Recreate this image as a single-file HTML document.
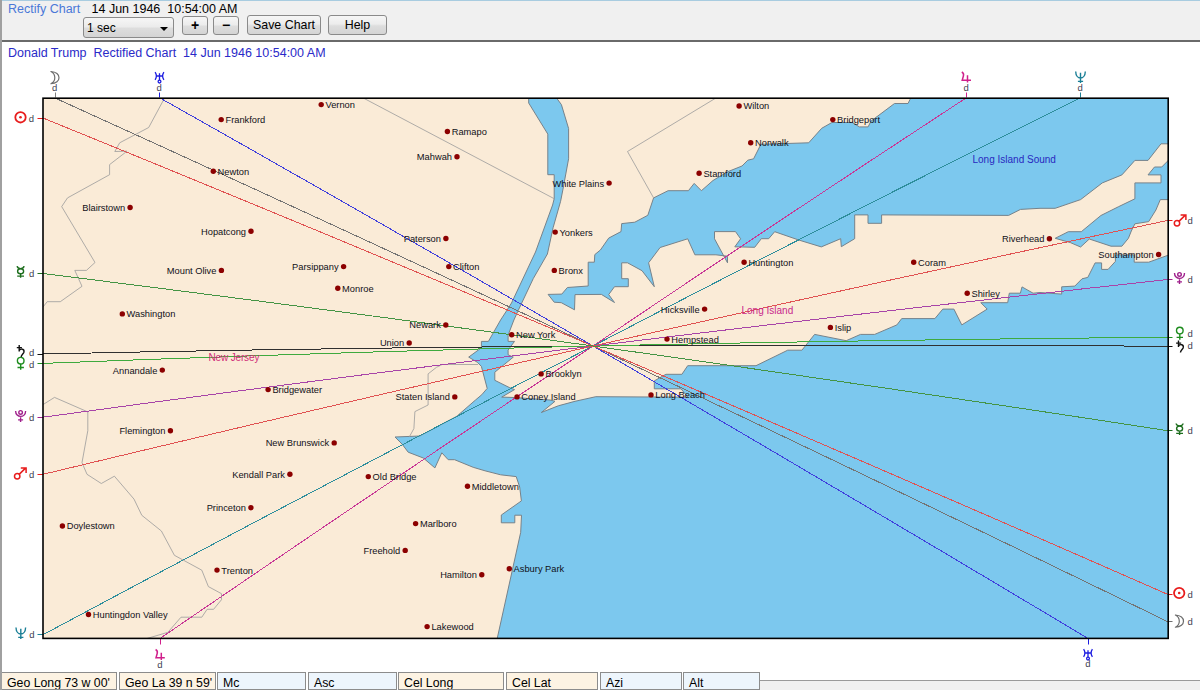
<!DOCTYPE html>
<html><head><meta charset="utf-8"><style>
html,body{margin:0;padding:0;}
body{width:1200px;height:690px;position:relative;overflow:hidden;background:#fff;font-family:"Liberation Sans",sans-serif;}
#hdr{position:absolute;left:0;top:0;width:1200px;height:40px;background:#f0f0f0;}
#topline{position:absolute;left:0;top:0;width:1200px;height:1px;background:#a8cce0;}
#hline{position:absolute;left:0;top:40px;width:1200px;height:2px;background:#6a6a6a;}
#lborder{position:absolute;left:0;top:0;width:1.5px;height:690px;background:#a0a0a0;}
.t{position:absolute;white-space:nowrap;}
.cl{position:absolute;white-space:nowrap;font-size:9.3px;line-height:12px;color:#101018;}
.cl.r{text-align:right;}
.btn{position:absolute;box-sizing:border-box;border:1px solid #8a8a8a;border-radius:3px;background:linear-gradient(#f6f6f6 0%,#ececec 45%,#dddddd 55%,#d4d4d4 100%);font-size:12.4px;color:#000;text-align:center;}
.cell{position:absolute;box-sizing:border-box;top:672px;height:18px;border:1px solid #8c8c8c;font-size:12.3px;padding-left:5px;line-height:21.5px;color:#000;white-space:nowrap;overflow:hidden;}
.be{background:#fdf3e3;} .bl{background:#edf5fc;}
</style></head><body>
<div id="hdr"></div><div id="topline"></div><div id="hline"></div>
<div class="t" style="left:8px;top:1.6px;font-size:12.5px;color:#4a78d8;">Rectify Chart</div>
<div class="t" style="left:91.5px;top:1.6px;font-size:12.5px;color:#000;">14 Jun 1946&nbsp;&nbsp;10:54:00 AM</div>
<div class="btn" style="left:83px;top:17px;width:91px;height:21px;text-align:left;padding-left:3px;line-height:20px;font-size:12px;">1 sec<span style="position:absolute;right:5px;top:8.5px;width:0;height:0;border-left:4px solid transparent;border-right:4px solid transparent;border-top:4px solid #000;"></span></div>
<div class="btn" style="left:182px;top:16px;width:26px;height:19px;line-height:17px;font-weight:bold;font-size:14px;">+</div>
<div class="btn" style="left:213px;top:16px;width:26px;height:19px;line-height:17px;font-weight:bold;font-size:14px;">&minus;</div>
<div class="btn" style="left:247px;top:15px;width:74px;height:20px;line-height:18px;">Save Chart</div>
<div class="btn" style="left:328px;top:15px;width:59px;height:20px;line-height:18px;">Help</div>
<div class="t" style="left:8px;top:46.3px;font-size:12.5px;color:#2a2ac8;">Donald Trump&nbsp;&nbsp;Rectified Chart&nbsp;&nbsp;14 Jun 1946 10:54:00 AM</div>
<svg width="1200" height="690" viewBox="0 0 1200 690" style="position:absolute;left:0;top:0"><rect x="43" y="98" width="1125" height="540.5" fill="#faebd7"/><g clip-path="url(#mapclip)"><defs><clipPath id="mapclip"><rect x="43" y="98" width="1125.5" height="540.5"/></clipPath></defs><polygon points="528.7,97.0 528.7,103.0 547.8,134.1 547.8,174.7 554.2,174.7 554.2,198.7 552.6,205.0 535.5,252.0 511.5,303.0 505.8,312.0 500.6,320.0 488.4,341.4 481.4,341.4 481.4,347.8 468.7,357.1 477.4,362.3 481.4,366.4 487.2,388.4 481.8,394.7 475.5,400.0 456.9,416.2 419.8,436.0 395.0,437.0 402.0,444.0 408.2,452.2 423.3,458.0 434.9,467.9 441.8,452.8 448.2,459.7 454.6,459.7 473.2,467.3 485.0,470.8 500.6,474.8 516.2,476.6 519.7,487.0 521.4,500.9 501.3,515.0 501.3,522.8 514.8,522.8 514.8,515.2 521.5,515.2 520.7,532.3 497.1,639.0 1169.0,639.0 1169.0,254.9 1148.7,262.2 1134.2,262.2 1134.2,254.9 1115.4,254.9 1115.4,261.4 1108.1,269.4 1101.6,269.4 1101.6,262.9 1095.1,262.9 1087.8,277.4 1082.0,278.8 1074.8,286.1 1061.7,286.8 1061.7,294.1 1040.0,292.5 1033.1,293.2 1022.0,286.9 1020.4,293.2 1009.3,293.2 1007.7,302.7 980.8,302.7 987.2,309.1 961.8,324.9 953.9,309.1 942.8,309.1 934.9,318.6 901.7,318.6 896.9,324.9 874.7,334.4 860.5,334.4 846.2,340.7 814.6,334.4 801.9,350.2 787.7,350.2 756.0,365.7 687.7,365.7 681.9,374.3 665.9,374.3 654.3,380.9 654.3,388.8 681.0,388.8 688.0,397.2 595.8,396.7 575.0,401.3 558.3,405.8 541.3,412.5 555.0,401.3 550.0,400.0 514.2,397.5 501.7,397.1 514.5,389.6 509.9,387.8 494.8,380.3 494.8,372.2 513.3,357.1 508.1,354.8 508.1,350.1 514.5,341.4 508.1,341.4 508.1,335.1 513.9,320.0 518.2,310.5 533.3,278.5 547.4,254.0 553.1,227.7 560.6,201.3 563.0,189.1 568.6,158.8 568.6,128.5 561.4,104.6 555.8,97.0" fill="#7cc8ee" stroke="#76828a" stroke-width="1" stroke-linejoin="miter"/><polygon points="548.1,294.4 554.2,302.2 561.3,302.7 574.5,309.8 575.0,294.6 601.4,294.4 614.5,302.5 608.7,294.6 614.5,286.7 628.3,286.7 628.3,278.7 621.7,278.7 621.7,262.8 627.5,262.8 642.0,270.7 654.3,286.7 648.6,262.8 660.1,247.5 687.7,238.8 694.9,254.8 715.9,254.8 727.5,256.2 727.5,262.8 714.5,238.8 714.5,231.6 735.5,231.6 740.6,238.8 734.8,246.8 754.7,247.3 761.3,238.7 768.7,238.7 774.7,231.7 798.7,240.0 821.3,246.9 840.7,238.7 841.3,246.7 854.7,238.7 854.7,214.9 868.0,214.9 868.0,223.3 881.6,223.3 881.6,214.9 1008.6,215.4 1020.5,209.4 1040.0,208.3 1055.2,208.3 1080.6,199.6 1102.3,182.9 1121.9,174.9 1134.9,160.4 1148.0,160.4 1161.0,143.8 1169.0,143.8 1169.0,97.0 910.5,97.0 910.0,99.5 908.0,103.5 894.5,103.5 871.0,121.1 868.1,126.9 859.4,126.9 852.2,122.5 831.9,122.5 821.7,128.3 808.7,142.8 760.9,144.3 753.6,158.8 747.8,160.2 742.0,166.0 727.5,171.8 713.0,180.5 701.4,190.7 694.2,183.4 688.4,190.7 668.1,190.7 653.6,197.9 647.8,215.3 634.8,222.2 621.7,223.6 621.0,231.6 608.7,238.1 600.4,250.0 594.8,254.6 594.3,262.2 588.2,262.2 588.2,286.0 567.4,287.5 561.8,294.1" fill="#7cc8ee" stroke="#76828a" stroke-width="1" stroke-linejoin="miter"/><polygon points="1169.0,159.7 1161.7,167.0 1154.5,167.0 1148.0,174.9 1161.0,174.9 1161.0,182.9 1134.9,182.9 1134.9,198.8 1118.3,206.8 1100.9,215.5 1081.3,231.7 1068.3,231.7 1055.2,238.3 1070.4,242.6 1080.6,247.0 1089.3,239.0 1111.0,246.2 1121.9,246.2 1128.4,238.3 1131.3,231.0 1134.9,223.8 1148.7,221.6 1155.9,210.0 1160.3,199.6 1169.0,199.6" fill="#7cc8ee" stroke="#76828a" stroke-width="1" stroke-linejoin="miter"/><polyline points="164.6,98.0 148.7,127.5 119.7,142.8 114.8,151.5 127.0,151.2 109.6,164.6 109.6,174.7 67.5,197.9 61.7,206.6 95.0,262.5 86.4,270.4 74.8,270.4 82.0,286.3 60.3,301.7 47.2,301.7 43.0,307.0" fill="none" stroke="#9a9a9a" stroke-width="0.8"/><polyline points="43.0,404.6 54.5,397.4 87.8,411.9 87.8,430.7 82.0,462.6 87.0,474.3 101.3,483.5 114.4,476.2 134.0,499.1 141.8,515.3 161.4,531.0 174.4,555.3 201.8,570.2 208.4,586.6 221.5,593.7 221.5,599.7 213.6,609.3 207.1,609.3 201.8,617.2 181.0,617.2 167.9,632.3 147.0,638.5" fill="none" stroke="#9a9a9a" stroke-width="0.8"/><polyline points="363.3,98.0 554.2,198.7" fill="none" stroke="#9a9a9a" stroke-width="0.8"/><polyline points="715.9,98.0 627.5,151.5 653.6,197.9" fill="none" stroke="#9a9a9a" stroke-width="0.8"/><polyline points="478.0,364.5 442.2,364.5 436.5,367.3 428.1,373.9 428.1,405.0 414.9,411.6 413.9,428.6 409.2,437.1" fill="none" stroke="#9a9a9a" stroke-width="0.8"/></g><path d="M55,98 Q324.0,220.0 593,346 Q880.5,481.9 1168,621.8" fill="none" stroke="#747474" stroke-width="1" shape-rendering="crispEdges"/><path d="M160,98 Q376.5,220.0 593,346 Q840.5,490.2 1088,638.5" fill="none" stroke="#4040dc" stroke-width="1" shape-rendering="crispEdges"/><path d="M966,98 Q779.5,220.0 593,346 Q376.5,490.2 160,638.5" fill="none" stroke="#c83896" stroke-width="1" shape-rendering="crispEdges"/><path d="M1080,98 Q836.5,219.0 593,346 Q318.0,487.4 43,634.7" fill="none" stroke="#2e8e9c" stroke-width="1" shape-rendering="crispEdges"/><path d="M43,118 Q318.0,230.0 593,346 Q880.5,468.2 1168,594.5" fill="none" stroke="#e05252" stroke-width="1" shape-rendering="crispEdges"/><path d="M43,273.5 Q318.0,307.8 593,346 Q880.5,386.4 1168,430.7" fill="none" stroke="#449444" stroke-width="1" shape-rendering="crispEdges"/><path d="M43,354 Q318.0,348.0 593,346 Q880.5,344.1 1168,346.3" fill="none" stroke="#303030" stroke-width="1" shape-rendering="crispEdges"/><path d="M43,363.4 Q318.0,352.7 593,346 Q880.5,339.6 1168,337.3" fill="none" stroke="#3eaa3e" stroke-width="1" shape-rendering="crispEdges"/><path d="M43,417.2 Q318.0,379.6 593,346 Q880.5,310.8 1168,279.5" fill="none" stroke="#a844a8" stroke-width="1" shape-rendering="crispEdges"/><path d="M43,474.3 Q318.0,408.1 593,346 Q880.5,281.2 1168,220.4" fill="none" stroke="#e05252" stroke-width="1" shape-rendering="crispEdges"/><circle cx="321.2" cy="104.6" r="2.7" fill="#8c0000"/><circle cx="221.2" cy="119.6" r="2.7" fill="#8c0000"/><circle cx="213.3" cy="171.2" r="2.7" fill="#8c0000"/><circle cx="130.1" cy="207.5" r="2.7" fill="#8c0000"/><circle cx="251" cy="231.2" r="2.7" fill="#8c0000"/><circle cx="221.4" cy="270.4" r="2.7" fill="#8c0000"/><circle cx="343.6" cy="266.6" r="2.7" fill="#8c0000"/><circle cx="337.8" cy="288.3" r="2.7" fill="#8c0000"/><circle cx="122.3" cy="313.9" r="2.7" fill="#8c0000"/><circle cx="162.3" cy="370.1" r="2.7" fill="#8c0000"/><circle cx="268.1" cy="389.6" r="2.7" fill="#8c0000"/><circle cx="170.4" cy="430.7" r="2.7" fill="#8c0000"/><circle cx="334.2" cy="442.9" r="2.7" fill="#8c0000"/><circle cx="289.9" cy="474.3" r="2.7" fill="#8c0000"/><circle cx="250.9" cy="507.8" r="2.7" fill="#8c0000"/><circle cx="62.4" cy="526" r="2.7" fill="#8c0000"/><circle cx="217" cy="570.1" r="2.7" fill="#8c0000"/><circle cx="88.5" cy="614.5" r="2.7" fill="#8c0000"/><circle cx="447.4" cy="131.5" r="2.7" fill="#8c0000"/><circle cx="457" cy="156.7" r="2.7" fill="#8c0000"/><circle cx="609.1" cy="183.1" r="2.7" fill="#8c0000"/><circle cx="445.9" cy="238.5" r="2.7" fill="#8c0000"/><circle cx="448.8" cy="266.6" r="2.7" fill="#8c0000"/><circle cx="555.2" cy="232.1" r="2.7" fill="#8c0000"/><circle cx="554.3" cy="270.4" r="2.7" fill="#8c0000"/><circle cx="445.8" cy="325" r="2.7" fill="#8c0000"/><circle cx="409.2" cy="343" r="2.7" fill="#8c0000"/><circle cx="511.7" cy="334.7" r="2.7" fill="#8c0000"/><circle cx="454.8" cy="396.9" r="2.7" fill="#8c0000"/><circle cx="541.1" cy="373.9" r="2.7" fill="#8c0000"/><circle cx="517" cy="396.9" r="2.7" fill="#8c0000"/><circle cx="368.3" cy="476.6" r="2.7" fill="#8c0000"/><circle cx="467.5" cy="486.3" r="2.7" fill="#8c0000"/><circle cx="415.6" cy="523.6" r="2.7" fill="#8c0000"/><circle cx="405.2" cy="550.4" r="2.7" fill="#8c0000"/><circle cx="481.8" cy="574.7" r="2.7" fill="#8c0000"/><circle cx="509.3" cy="568.8" r="2.7" fill="#8c0000"/><circle cx="427.1" cy="626.6" r="2.7" fill="#8c0000"/><circle cx="739.1" cy="106" r="2.7" fill="#8c0000"/><circle cx="832.8" cy="119.6" r="2.7" fill="#8c0000"/><circle cx="750.7" cy="142.8" r="2.7" fill="#8c0000"/><circle cx="699.1" cy="173.3" r="2.7" fill="#8c0000"/><circle cx="744.1" cy="262.2" r="2.7" fill="#8c0000"/><circle cx="704.6" cy="309.1" r="2.7" fill="#8c0000"/><circle cx="667" cy="339.1" r="2.7" fill="#8c0000"/><circle cx="651" cy="394.9" r="2.7" fill="#8c0000"/><circle cx="830.4" cy="327.4" r="2.7" fill="#8c0000"/><circle cx="913.7" cy="262.2" r="2.7" fill="#8c0000"/><circle cx="967.2" cy="293.2" r="2.7" fill="#8c0000"/><circle cx="1049.4" cy="238.7" r="2.7" fill="#8c0000"/><circle cx="1158.6" cy="254.5" r="2.7" fill="#8c0000"/><g transform="translate(54.5,77.5)"><path d="M-3.6,-6 C7.2,-5.5 7.2,5.8 -3.6,6.2 C1.6,3.5 1.6,-3.2 -3.6,-6 Z" fill="#fff" stroke="#6e6e6e" stroke-width="1.2" stroke-linejoin="round"/></g><text x="52" y="90.5" font-family="Liberation Sans" font-size="9.5" fill="#404050">d</text><g transform="translate(159.5,77.5)" fill="none" stroke="#1c1ce0" stroke-width="1.3"><path d="M-4.4,-5.4 Q-1.8,-1.5 -4.4,2.4 M4.4,-5.4 Q1.8,-1.5 4.4,2.4 M-3.2,-1.5 H3.2 M0,-4.2 V2.6"/><circle cy="4.1" r="1.4"/></g><text x="156.5" y="90.5" font-family="Liberation Sans" font-size="9.5" fill="#404050">d</text><g transform="translate(966.2,77)" fill="none" stroke="#d0208c" stroke-width="1.5"><path d="M-4.4,-5 C-2.6,-4 -2.2,-3 -2.8,-1 L-4,3.2 H4.8 M1.3,-1.8 V5.6"/></g><text x="963.5" y="90.5" font-family="Liberation Sans" font-size="9.5" fill="#404050">d</text><g transform="translate(1080.5,77)" fill="none" stroke="#1a7f96" stroke-width="1.4"><path d="M-4.8,-5.6 C-4.6,3.2 4.6,3.2 4.8,-5.6 M0,-4.2 V6 M-2.6,4.4 H2.6"/></g><text x="1077.5" y="90.5" font-family="Liberation Sans" font-size="9.5" fill="#404050">d</text><line x1="55.5" y1="92.5" x2="55.5" y2="97.5" stroke="#808080" stroke-width="1"/><line x1="159.5" y1="92.5" x2="159.5" y2="97.5" stroke="#1c1ce0" stroke-width="1"/><line x1="966.5" y1="92.5" x2="966.5" y2="97.5" stroke="#d0208c" stroke-width="1"/><line x1="1080.5" y1="92.5" x2="1080.5" y2="97.5" stroke="#1a7f96" stroke-width="1"/><g transform="translate(20.5,117.3)"><circle r="5.2" fill="none" stroke="#e81c1c" stroke-width="1.8"/><circle r="1.3" fill="#e81c1c"/></g><text x="28.8" y="122" font-family="Liberation Sans" font-size="9.5" fill="#404050">d</text><g transform="translate(20.6,272)" fill="none" stroke="#1e6e1e" stroke-width="1.4"><path d="M-3.5,-5.8 C-3.2,-4 -2,-3.4 0,-3.4 C2,-3.4 3.2,-4 3.5,-5.8 M0,1.9 V5.7 M-3.4,4.1 H3.4"/><ellipse cy="-0.7" rx="3" ry="2.5"/></g><text x="29" y="277" font-family="Liberation Sans" font-size="9.5" fill="#404050">d</text><g transform="translate(20.3,351)" fill="none" stroke="#101010" stroke-width="1.4"><path d="M-1.1,-6 V0.6 M-3.5,-3.4 H1.6 M-1.1,-0.6 C0.6,-2.6 4.4,-2.2 3.6,1.2 C3,3.2 0.8,3.8 0.9,6"/></g><text x="29" y="356" font-family="Liberation Sans" font-size="9.5" fill="#404050">d</text><g transform="translate(20.7,363.6)" fill="none" stroke="#1e8c1e" stroke-width="1.4"><circle cy="-2.9" r="3.3"/><path d="M0,0.5 V6.2 M-3.2,3.9 H3.2"/></g><text x="29" y="368" font-family="Liberation Sans" font-size="9.5" fill="#404050">d</text><g transform="translate(20.6,416)" fill="none" stroke="#a0208c" stroke-width="1.4"><circle cy="-3.6" r="1.8"/><path d="M-5,-5 C-5,2.2 5,2.2 5,-5 M0,1.2 V5.9 M-2.5,3.9 H2.5"/></g><text x="29" y="421" font-family="Liberation Sans" font-size="9.5" fill="#404050">d</text><g transform="translate(20.2,473.5)" fill="none" stroke="#e81c1c" stroke-width="1.5"><circle cx="-3" cy="2.8" r="2.7"/><path d="M-1.1,0.9 L5.6,-5.6 M0.6,-5.6 H5.9 V-0.4"/></g><text x="29" y="477.6" font-family="Liberation Sans" font-size="9.5" fill="#404050">d</text><g transform="translate(20.8,633)" fill="none" stroke="#1a7f96" stroke-width="1.4"><path d="M-4.8,-5.6 C-4.6,3.2 4.6,3.2 4.8,-5.6 M0,-4.2 V6 M-2.6,4.4 H2.6"/></g><text x="29.2" y="638" font-family="Liberation Sans" font-size="9.5" fill="#404050">d</text><line x1="37.5" y1="118.5" x2="43" y2="118.5" stroke="#e81c1c" stroke-width="1"/><line x1="37.5" y1="273.5" x2="43" y2="273.5" stroke="#1e6e1e" stroke-width="1"/><line x1="37.5" y1="354.5" x2="43" y2="354.5" stroke="#101010" stroke-width="1"/><line x1="37.5" y1="363.5" x2="43" y2="363.5" stroke="#1e8c1e" stroke-width="1"/><line x1="37.5" y1="417.5" x2="43" y2="417.5" stroke="#a0208c" stroke-width="1"/><line x1="37.5" y1="474.5" x2="43" y2="474.5" stroke="#e81c1c" stroke-width="1"/><line x1="37.5" y1="634.5" x2="43" y2="634.5" stroke="#1a7f96" stroke-width="1"/><g transform="translate(1180,220.5)" fill="none" stroke="#e81c1c" stroke-width="1.5"><circle cx="-3" cy="2.8" r="2.7"/><path d="M-1.1,0.9 L5.6,-5.6 M0.6,-5.6 H5.9 V-0.4"/></g><text x="1187.6" y="224" font-family="Liberation Sans" font-size="9.5" fill="#404050">d</text><g transform="translate(1179.5,278)" fill="none" stroke="#a0208c" stroke-width="1.4"><circle cy="-3.6" r="1.8"/><path d="M-5,-5 C-5,2.2 5,2.2 5,-5 M0,1.2 V5.9 M-2.5,3.9 H2.5"/></g><text x="1187.6" y="283" font-family="Liberation Sans" font-size="9.5" fill="#404050">d</text><g transform="translate(1179.8,333.5)" fill="none" stroke="#1e8c1e" stroke-width="1.4"><circle cy="-2.9" r="3.3"/><path d="M0,0.5 V6.2 M-3.2,3.9 H3.2"/></g><text x="1187.6" y="337" font-family="Liberation Sans" font-size="9.5" fill="#404050">d</text><g transform="translate(1179.6,346.5)" fill="none" stroke="#101010" stroke-width="1.4"><path d="M-1.1,-6 V0.6 M-3.5,-3.4 H1.6 M-1.1,-0.6 C0.6,-2.6 4.4,-2.2 3.6,1.2 C3,3.2 0.8,3.8 0.9,6"/></g><text x="1187.6" y="349" font-family="Liberation Sans" font-size="9.5" fill="#404050">d</text><g transform="translate(1179.6,429.3)" fill="none" stroke="#1e6e1e" stroke-width="1.4"><path d="M-3.5,-5.8 C-3.2,-4 -2,-3.4 0,-3.4 C2,-3.4 3.2,-4 3.5,-5.8 M0,1.9 V5.7 M-3.4,4.1 H3.4"/><ellipse cy="-0.7" rx="3" ry="2.5"/></g><text x="1187.6" y="434" font-family="Liberation Sans" font-size="9.5" fill="#404050">d</text><g transform="translate(1179.2,593)"><circle r="5.2" fill="none" stroke="#e81c1c" stroke-width="1.8"/><circle r="1.3" fill="#e81c1c"/></g><text x="1187.6" y="597.7" font-family="Liberation Sans" font-size="9.5" fill="#404050">d</text><g transform="translate(1179,621)"><path d="M-3.6,-6 C7.2,-5.5 7.2,5.8 -3.6,6.2 C1.6,3.5 1.6,-3.2 -3.6,-6 Z" fill="#fff" stroke="#6e6e6e" stroke-width="1.2" stroke-linejoin="round"/></g><text x="1187.6" y="625" font-family="Liberation Sans" font-size="9.5" fill="#404050">d</text><line x1="1168" y1="220.5" x2="1172.5" y2="220.5" stroke="#e81c1c" stroke-width="1"/><line x1="1168" y1="279.5" x2="1172.5" y2="279.5" stroke="#a0208c" stroke-width="1"/><line x1="1168" y1="337.5" x2="1172.5" y2="337.5" stroke="#1e8c1e" stroke-width="1"/><line x1="1168" y1="346.5" x2="1172.5" y2="346.5" stroke="#101010" stroke-width="1"/><line x1="1168" y1="430.5" x2="1172.5" y2="430.5" stroke="#1e6e1e" stroke-width="1"/><line x1="1168" y1="594.5" x2="1172.5" y2="594.5" stroke="#e81c1c" stroke-width="1"/><line x1="1168" y1="621.5" x2="1172.5" y2="621.5" stroke="#6e6e6e" stroke-width="1"/><g transform="translate(160,654.5)" fill="none" stroke="#d0208c" stroke-width="1.5"><path d="M-4.4,-5 C-2.6,-4 -2.2,-3 -2.8,-1 L-4,3.2 H4.8 M1.3,-1.8 V5.6"/></g><text x="157.3" y="668" font-family="Liberation Sans" font-size="9.5" fill="#404050">d</text><g transform="translate(1088,654.5)" fill="none" stroke="#1c1ce0" stroke-width="1.3"><path d="M-4.4,-5.4 Q-1.8,-1.5 -4.4,2.4 M4.4,-5.4 Q1.8,-1.5 4.4,2.4 M-3.2,-1.5 H3.2 M0,-4.2 V2.6"/><circle cy="4.1" r="1.4"/></g><text x="1085.3" y="667" font-family="Liberation Sans" font-size="9.5" fill="#404050">d</text><line x1="160.5" y1="639" x2="160.5" y2="644.5" stroke="#d0208c" stroke-width="1"/><line x1="1088.5" y1="639" x2="1088.5" y2="644.5" stroke="#1c1ce0" stroke-width="1"/><rect x="43" y="98.2" width="1125.2" height="540.2" fill="none" stroke="#000" stroke-width="1.6"/></svg>
<div class="cl" style="left:325.5px;top:99.00px">Vernon</div><div class="cl" style="left:225.5px;top:114.00px">Frankford</div><div class="cl" style="left:217.6px;top:165.60px">Newton</div><div class="cl r" style="right:1074.9px;top:201.90px">Blairstown</div><div class="cl r" style="right:954.0px;top:225.60px">Hopatcong</div><div class="cl r" style="right:983.6px;top:264.80px">Mount Olive</div><div class="cl r" style="right:861.4px;top:261.00px">Parsippany</div><div class="cl" style="left:342.1px;top:282.70px">Monroe</div><div class="cl" style="left:126.6px;top:308.30px">Washington</div><div class="cl r" style="right:1042.7px;top:364.50px">Annandale</div><div class="cl" style="left:272.4px;top:384.00px">Bridgewater</div><div class="cl r" style="right:1034.6px;top:425.10px">Flemington</div><div class="cl r" style="right:870.8px;top:437.30px">New Brunswick</div><div class="cl r" style="right:915.1px;top:468.70px">Kendall Park</div><div class="cl r" style="right:954.1px;top:502.20px">Princeton</div><div class="cl" style="left:66.7px;top:520.40px">Doylestown</div><div class="cl" style="left:221.3px;top:564.50px">Trenton</div><div class="cl" style="left:92.8px;top:608.90px">Huntingdon Valley</div><div class="cl" style="left:451.7px;top:125.90px">Ramapo</div><div class="cl r" style="right:748.0px;top:151.10px">Mahwah</div><div class="cl r" style="right:595.9px;top:177.50px">White Plains</div><div class="cl r" style="right:759.1px;top:232.90px">Paterson</div><div class="cl" style="left:453.1px;top:261.00px">Clifton</div><div class="cl" style="left:559.5px;top:226.50px">Yonkers</div><div class="cl" style="left:558.6px;top:264.80px">Bronx</div><div class="cl r" style="right:759.2px;top:319.40px">Newark</div><div class="cl r" style="right:795.8px;top:337.40px">Union</div><div class="cl" style="left:516.0px;top:329.10px">New York</div><div class="cl r" style="right:750.2px;top:391.30px">Staten Island</div><div class="cl" style="left:545.4px;top:368.30px">Brooklyn</div><div class="cl" style="left:521.3px;top:391.30px">Coney Island</div><div class="cl" style="left:372.6px;top:471.00px">Old Bridge</div><div class="cl" style="left:471.8px;top:480.70px">Middletown</div><div class="cl" style="left:419.9px;top:518.00px">Marlboro</div><div class="cl r" style="right:799.8px;top:544.80px">Freehold</div><div class="cl r" style="right:723.2px;top:569.10px">Hamilton</div><div class="cl" style="left:513.6px;top:563.20px">Asbury Park</div><div class="cl" style="left:431.4px;top:621.00px">Lakewood</div><div class="cl" style="left:743.4px;top:100.40px">Wilton</div><div class="cl" style="left:837.1px;top:114.00px">Bridgeport</div><div class="cl" style="left:755.0px;top:137.20px">Norwalk</div><div class="cl" style="left:703.4px;top:167.70px">Stamford</div><div class="cl" style="left:748.4px;top:256.60px">Huntington</div><div class="cl r" style="right:500.4px;top:303.50px">Hicksville</div><div class="cl" style="left:671.3px;top:333.50px">Hempstead</div><div class="cl" style="left:655.3px;top:389.30px">Long Beach</div><div class="cl" style="left:834.7px;top:321.80px">Islip</div><div class="cl" style="left:918.0px;top:256.60px">Coram</div><div class="cl" style="left:971.5px;top:287.60px">Shirley</div><div class="cl r" style="right:155.6px;top:233.10px">Riverhead</div><div class="cl r" style="right:46.4px;top:248.90px">Southampton</div>
<div class="t" style="left:208.5px;top:352px;font-size:10px;letter-spacing:-0.15px;color:#d02c78;">New Jersey</div>
<div class="t" style="left:741.5px;top:304.8px;font-size:10px;color:#c8288c;">Long Island</div>
<div class="t" style="left:972.5px;top:153.6px;font-size:10px;color:#2828c0;">Long Island Sound</div>
<div style="position:absolute;left:759px;top:680px;width:441px;height:10px;background:#f0f0f0;border-top:1px solid #9a9a9a;"></div>
<div class="cell be" style="left:1px;width:116px;">Geo Long 73 w 00'</div>
<div class="cell be" style="left:119px;width:97px;">Geo La 39 n 59'</div>
<div class="cell bl" style="left:217px;width:89px;">Mc</div>
<div class="cell bl" style="left:308px;width:89px;">Asc</div>
<div class="cell be" style="left:398px;width:106px;">Cel Long</div>
<div class="cell be" style="left:506px;width:92px;">Cel Lat</div>
<div class="cell bl" style="left:600px;width:82px;">Azi</div>
<div class="cell bl" style="left:683px;width:77px;">Alt</div>
<div id="lborder"></div>
</body></html>
